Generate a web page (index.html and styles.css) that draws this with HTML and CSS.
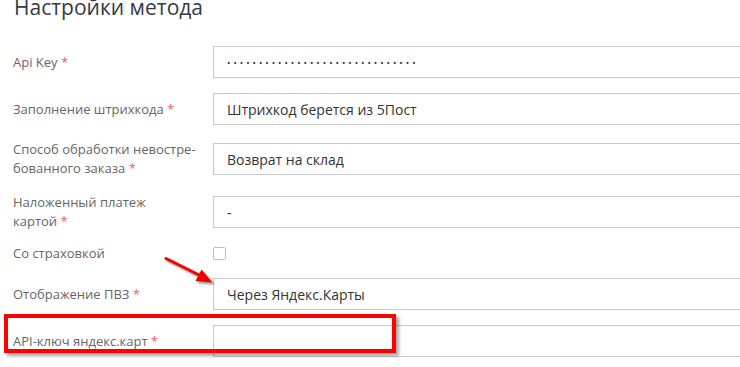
FILE: index.html
```html
<!DOCTYPE html>
<html lang="ru">
<head>
<meta charset="utf-8">
<title>Настройки метода</title>
<link rel="stylesheet" href="styles.css">
</head>
<body>
<div class="page">
  <h1 class="title">Настройки метода</h1>
  <form class="form">
    <div class="row">
      <label class="label">Api Key <span class="req">*</span></label>
      <div class="control"><input class="input input-pass" type="password" value="111111111111111111111111111111"></div>
    </div>
    <div class="row">
      <label class="label">Заполнение штрихкода <span class="req">*</span></label>
      <div class="control"><div class="input">Штрихкод берется из 5Пост</div></div>
    </div>
    <div class="row">
      <label class="label">Способ обработки невостре&shy;бованного заказа <span class="req">*</span></label>
      <div class="control"><div class="input">Возврат на склад</div></div>
    </div>
    <div class="row">
      <label class="label">Наложенный платеж <span class="nw">картой <span class="req">*</span></span></label>
      <div class="control"><div class="input">-</div></div>
    </div>
    <div class="row row-check">
      <label class="label">Со страховкой</label>
      <div class="control"><span class="checkbox"></span></div>
    </div>
    <div class="row">
      <label class="label">Отображение ПВЗ <span class="req">*</span></label>
      <div class="control"><div class="input">Через Яндекс.Карты</div></div>
    </div>
    <div class="row">
      <label class="label">API-ключ яндекс.карт <span class="req">*</span></label>
      <div class="control"><div class="input"></div></div>
    </div>
  </form>
  <div class="annot-box"></div>
  <svg class="annot-arrow" width="80" height="50" viewBox="0 0 80 50">
    <defs>
      <filter id="sh" x="-20%" y="-20%" width="160%" height="160%">
        <feGaussianBlur in="SourceAlpha" stdDeviation="1.2"/>
        <feOffset dx="2" dy="2" result="b"/>
        <feComponentTransfer><feFuncA type="linear" slope="0.45"/></feComponentTransfer>
        <feMerge><feMergeNode/><feMergeNode in="SourceGraphic"/></feMerge>
      </filter>
    </defs>
    <g filter="url(#sh)" transform="translate(-150 -255)">
      <line x1="166" y1="266.5" x2="200" y2="283.5" stroke="#f20000" stroke-width="3" stroke-linecap="round"/>
      <polygon points="212.5,290.5 201.5,277.5 195.5,289" fill="#f20000"/>
    </g>
  </svg>
</div>
</body>
</html>
```

FILE: styles.css
```css
html, body {
  margin: 0;
  padding: 0;
  overflow: hidden;
  background: #fff;
}

body {
  font-family: "Open Sans", "Noto Sans", sans-serif;
  width: 740px;
  height: 367px;
}

.page {
  position: relative;
  padding-left: 13px;
  height: 367px;
}

.title {
  margin: -8px 0 0 1px;
  font-size: 21px;
  line-height: 30px;
  font-weight: 400;
  color: #333b44;
  height: 38px;
  box-sizing: border-box;
}

.form {
  margin-top: 8.5px;
}

.row {
  display: flex;
  align-items: center;
  padding: 7.5px 0;
}

.row-check {
  padding: 5.5px 0 7.5px;
}

.label {
  flex: none;
  width: 200px;
  box-sizing: border-box;
  padding-right: 15px;
  font-size: 13px;
  line-height: 19px;
  color: #666;
  hyphens: manual;
}

.nw {
  white-space: nowrap;
}

.req {
  color: #e8625f;
}

.control {
  flex: 1;
  min-width: 0;
  display: flex;
  align-items: center;
}

.input {
  display: flex;
  align-items: center;
  width: 600px;
  height: 32px;
  box-sizing: border-box;
  border: 1px solid #c8c8c8;
  padding: 0 13px;
  font-family: "Open Sans", "Noto Sans", sans-serif;
  font-size: 14px;
  color: #333;
  background: #fff;
  flex: none;
  margin: 0;
}

.input-pass {
  font-size: 9px;
  letter-spacing: 3px;
  color: #333;
  outline: none;
}

.checkbox {
  display: block;
  width: 13px;
  height: 13px;
  box-sizing: border-box;
  border: 1px solid #bdbdbd;
  border-radius: 2px;
  background: #fff;
}

.annot-box {
  position: absolute;
  left: 4px;
  top: 322px;
  width: 392px;
  height: 39px;
  box-sizing: border-box;
  border: 4px solid #f00;
  box-shadow: 3px 3px 3px rgba(0, 0, 0, 0.35);
}

.annot-arrow {
  position: absolute;
  left: 150px;
  top: 255px;
  overflow: visible;
}
```
